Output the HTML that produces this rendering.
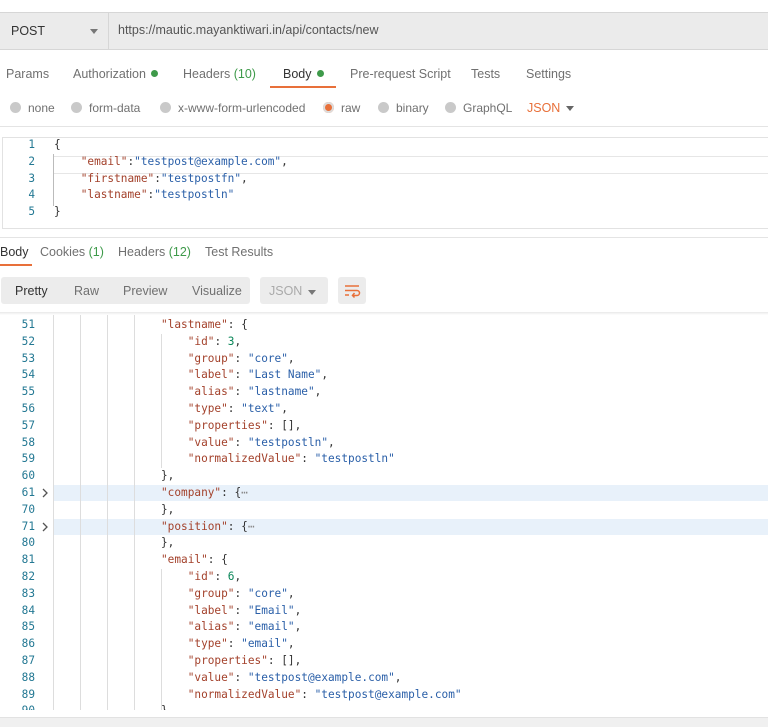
<!DOCTYPE html><html><head><style>
body{margin:0;width:768px;height:726px;background:#fff;font-family:"Liberation Sans",sans-serif;position:relative;overflow:hidden;color:#333}
.a{position:absolute;white-space:pre}
.t{font-size:12.5px;color:#707070}
.g{color:#3e9a4a}
.dot{display:inline-block;width:7px;height:7px;border-radius:50%;background:#3e9a4a;margin-left:5px;vertical-align:1px}
.r{display:inline-block;width:11px;height:11px;border-radius:50%;background:#c9c9c9;margin-right:7px;vertical-align:-1px}
.rr{font-size:12px}
.code{font-family:"DejaVu Sans Mono",monospace;font-size:11.1px;line-height:16.8px}
.ln{color:#237893;width:35px;text-align:right}
.k{color:#a3412b}.s{color:#2a5fa8}.n{color:#098658}.p{color:#333}
.vg{position:absolute;width:1px;background:#ddd}
</style></head><body>
<div class="a" style="left:0;top:12px;width:768px;height:36px;background:#ebebeb;border-top:1px solid #d6d6d6;border-bottom:1px solid #d6d6d6"></div>
<div class="a" style="left:108px;top:12px;width:1px;height:37px;background:#d6d6d6"></div>
<div class="a" style="left:11px;top:24px;font-size:12.5px;color:#333">POST</div>
<div class="a" style="left:90px;top:29px;border-left:4px solid transparent;border-right:4px solid transparent;border-top:5px solid #777"></div>
<div class="a" style="left:118px;top:23px;font-size:12.5px;color:#555">https://mautic.mayanktiwari.in/api/contacts/new</div>
<div class="a t" style="left:6px;top:67px">Params</div>
<div class="a t" style="left:73px;top:67px">Authorization<span class="dot"></span></div>
<div class="a t" style="left:183px;top:67px">Headers <span class="g">(10)</span></div>
<div class="a t" style="left:283px;top:67px;color:#333">Body<span class="dot"></span></div>
<div class="a" style="left:270px;top:86px;width:66px;height:2px;background:#e8703a"></div>
<div class="a t" style="left:350px;top:67px">Pre-request Script</div>
<div class="a t" style="left:471px;top:67px">Tests</div>
<div class="a t" style="left:526px;top:67px">Settings</div>
<div class="a t rr" style="left:10px;top:101px"><span class="r"></span>none</div>
<div class="a t rr" style="left:71px;top:101px"><span class="r"></span>form-data</div>
<div class="a t rr" style="left:160px;top:101px"><span class="r"></span>x-www-form-urlencoded</div>
<div class="a t rr" style="left:323px;top:101px"><span class="r" style="background:#e8703a;box-shadow:0 0 0 2px #ddd inset"></span>raw</div>
<div class="a t rr" style="left:378px;top:101px"><span class="r"></span>binary</div>
<div class="a t rr" style="left:445px;top:101px"><span class="r"></span>GraphQL</div>
<div class="a t" style="left:527px;top:101px;color:#e8703a">JSON</div>
<div class="a" style="left:566px;top:106px;border-left:4px solid transparent;border-right:4px solid transparent;border-top:5px solid #666"></div>
<div class="a" style="left:0;top:126px;width:768px;height:1px;background:#e4e4e4"></div>
<div class="a" style="left:2px;top:137px;width:766px;height:90px;border:1px solid #e2e2e2;border-right:none"></div>
<div class="a" style="left:54px;top:156px;width:714px;height:16px;border-top:1px solid #e6e6e6;border-bottom:1px solid #e6e6e6"></div>
<div class="a" style="left:53px;top:154px;width:1px;height:52px;background:#bbb"></div>
<div class="a code" style="left:0;top:137px;line-height:16.75px">
<div class="a ln" style="top:0">1</div><div class="a ln" style="top:16.75px">2</div><div class="a ln" style="top:33.5px">3</div><div class="a ln" style="top:50.25px">4</div><div class="a ln" style="top:67px">5</div>
<div class="a p" style="left:54px;top:0">{</div>
<div class="a" style="left:54px;top:16.75px">    <span class="k">"email"</span>:<span class="s">"testpost@example.com"</span>,</div>
<div class="a" style="left:54px;top:33.5px">    <span class="k">"firstname"</span>:<span class="s">"testpostfn"</span>,</div>
<div class="a" style="left:54px;top:50.25px">    <span class="k">"lastname"</span>:<span class="s">"testpostln"</span></div>
<div class="a p" style="left:54px;top:67px">}</div>
</div>
<div class="a" style="left:0;top:237px;width:768px;height:1px;background:#e4e4e4"></div>
<div class="a t" style="left:0;top:245px;color:#333">Body</div>
<div class="a" style="left:0;top:264px;width:32px;height:2px;background:#e8703a"></div>
<div class="a t" style="left:40px;top:245px">Cookies <span class="g">(1)</span></div>
<div class="a t" style="left:118px;top:245px">Headers <span class="g">(12)</span></div>
<div class="a t" style="left:205px;top:245px">Test Results</div>
<div class="a" style="left:1px;top:277px;width:249px;height:27px;background:#ececec;border-radius:3px"></div>
<div class="a t" style="left:15px;top:284px;color:#333">Pretty</div>
<div class="a t" style="left:74px;top:284px">Raw</div>
<div class="a t" style="left:123px;top:284px">Preview</div>
<div class="a t" style="left:192px;top:284px">Visualize</div>
<div class="a" style="left:260px;top:277px;width:68px;height:27px;background:#ececec;border-radius:3px"></div>
<div class="a t" style="left:269px;top:284px;color:#aaa">JSON</div>
<div class="a" style="left:308px;top:290px;border-left:4px solid transparent;border-right:4px solid transparent;border-top:5px solid #777"></div>
<div class="a" style="left:338px;top:277px;width:28px;height:27px;background:#ececec;border-radius:3px"></div>
<svg class="a" style="left:338px;top:277px" width="28" height="27"><g stroke="#e8703a" stroke-width="1.5" fill="none"><path d="M7 9h14M7 13.5h12a2.5 2.5 0 0 1 0 5h-4M7 18h4M16.5 16l-2 2.5 2 2"/></g></svg>
<div class="a" style="left:0;top:312px;width:768px;height:3px;background:linear-gradient(#e8e8e8,#fff)"></div>
<div class="a" style="left:53px;top:485px;width:715px;height:16px;background:#e8f1fa"></div>
<div class="a" style="left:53px;top:519px;width:715px;height:16px;background:#e8f1fa"></div>
<svg class="a" style="left:40px;top:487px" width="10" height="12"><path d="M3 2l4 4-4 4" stroke="#555" stroke-width="1.3" fill="none"/></svg>
<svg class="a" style="left:40px;top:521px" width="10" height="12"><path d="M3 2l4 4-4 4" stroke="#555" stroke-width="1.3" fill="none"/></svg>
<div class="vg" style="left:53px;top:315px;height:395px"></div>
<div class="vg" style="left:80px;top:315px;height:395px"></div>
<div class="vg" style="left:107px;top:315px;height:395px"></div>
<div class="vg" style="left:134px;top:315px;height:395px"></div>
<div class="vg" style="left:161px;top:334px;height:134px"></div>
<div class="vg" style="left:161px;top:569px;height:141px"></div>
<div class="a code" style="left:0;top:317px;height:393px;width:768px;overflow:hidden">
<div class="a ln" style="top:0">51</div><div class="a" style="left:161px;top:0"><span class="k">"lastname"</span>: {</div>
<div class="a ln" style="top:16.8px">52</div><div class="a" style="left:161px;top:16.8px">    <span class="k">"id"</span>: <span class="n">3</span>,</div>
<div class="a ln" style="top:33.6px">53</div><div class="a" style="left:161px;top:33.6px">    <span class="k">"group"</span>: <span class="s">"core"</span>,</div>
<div class="a ln" style="top:50.4px">54</div><div class="a" style="left:161px;top:50.4px">    <span class="k">"label"</span>: <span class="s">"Last Name"</span>,</div>
<div class="a ln" style="top:67.2px">55</div><div class="a" style="left:161px;top:67.2px">    <span class="k">"alias"</span>: <span class="s">"lastname"</span>,</div>
<div class="a ln" style="top:84px">56</div><div class="a" style="left:161px;top:84px">    <span class="k">"type"</span>: <span class="s">"text"</span>,</div>
<div class="a ln" style="top:100.8px">57</div><div class="a" style="left:161px;top:100.8px">    <span class="k">"properties"</span>: [],</div>
<div class="a ln" style="top:117.6px">58</div><div class="a" style="left:161px;top:117.6px">    <span class="k">"value"</span>: <span class="s">"testpostln"</span>,</div>
<div class="a ln" style="top:134.4px">59</div><div class="a" style="left:161px;top:134.4px">    <span class="k">"normalizedValue"</span>: <span class="s">"testpostln"</span></div>
<div class="a ln" style="top:151.2px">60</div><div class="a" style="left:161px;top:151.2px">},</div>
<div class="a ln" style="top:168px">61</div><div class="a" style="left:161px;top:168px"><span class="k">"company"</span>: {<span style="color:#888">⋯</span></div>
<div class="a ln" style="top:184.8px">70</div><div class="a" style="left:161px;top:184.8px">},</div>
<div class="a ln" style="top:201.6px">71</div><div class="a" style="left:161px;top:201.6px"><span class="k">"position"</span>: {<span style="color:#888">⋯</span></div>
<div class="a ln" style="top:218.4px">80</div><div class="a" style="left:161px;top:218.4px">},</div>
<div class="a ln" style="top:235.2px">81</div><div class="a" style="left:161px;top:235.2px"><span class="k">"email"</span>: {</div>
<div class="a ln" style="top:252px">82</div><div class="a" style="left:161px;top:252px">    <span class="k">"id"</span>: <span class="n">6</span>,</div>
<div class="a ln" style="top:268.8px">83</div><div class="a" style="left:161px;top:268.8px">    <span class="k">"group"</span>: <span class="s">"core"</span>,</div>
<div class="a ln" style="top:285.6px">84</div><div class="a" style="left:161px;top:285.6px">    <span class="k">"label"</span>: <span class="s">"Email"</span>,</div>
<div class="a ln" style="top:302.4px">85</div><div class="a" style="left:161px;top:302.4px">    <span class="k">"alias"</span>: <span class="s">"email"</span>,</div>
<div class="a ln" style="top:319.2px">86</div><div class="a" style="left:161px;top:319.2px">    <span class="k">"type"</span>: <span class="s">"email"</span>,</div>
<div class="a ln" style="top:336px">87</div><div class="a" style="left:161px;top:336px">    <span class="k">"properties"</span>: [],</div>
<div class="a ln" style="top:352.8px">88</div><div class="a" style="left:161px;top:352.8px">    <span class="k">"value"</span>: <span class="s">"testpost@example.com"</span>,</div>
<div class="a ln" style="top:369.6px">89</div><div class="a" style="left:161px;top:369.6px">    <span class="k">"normalizedValue"</span>: <span class="s">"testpost@example.com"</span></div>
<div class="a ln" style="top:386.4px">90</div><div class="a" style="left:161px;top:386.4px">}</div>
</div>
<div class="a" style="left:0;top:717px;width:768px;height:9px;background:#f0f0f0;border-top:1px solid #e2e2e2"></div>
</body></html>
